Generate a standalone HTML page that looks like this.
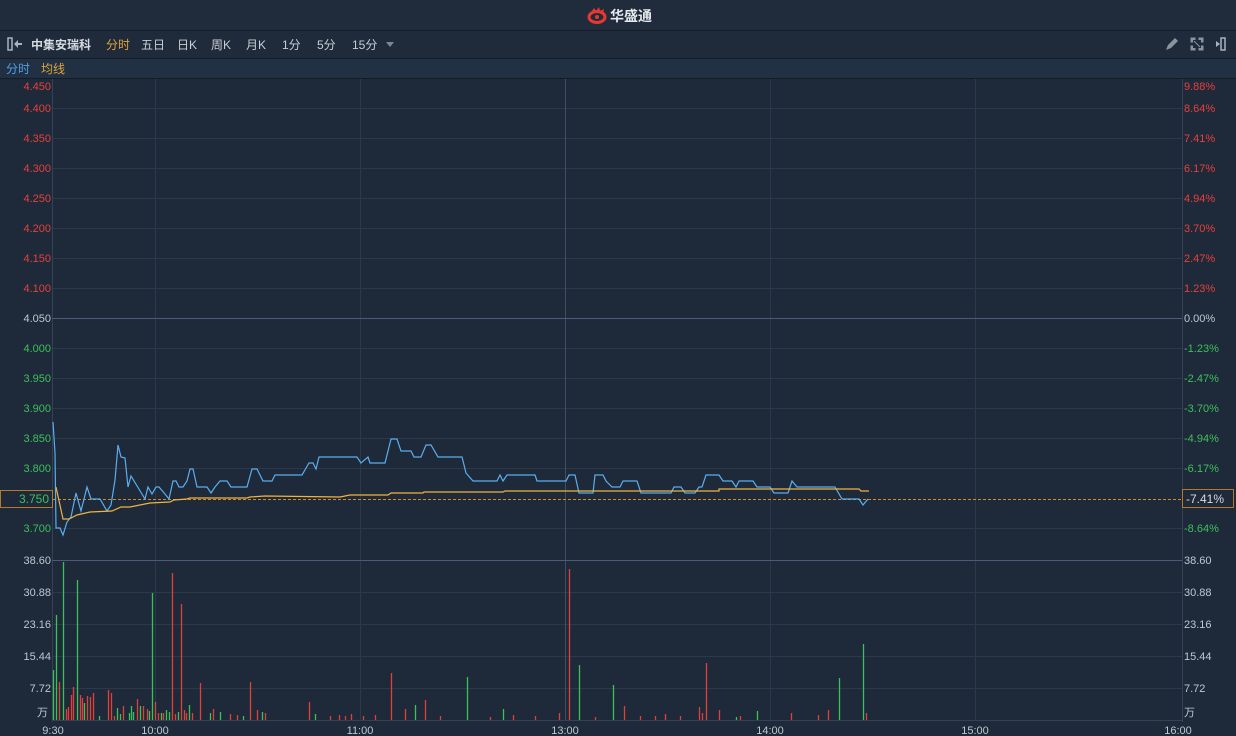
<!DOCTYPE html>
<html><head><meta charset="utf-8"><style>
body{margin:0;width:1236px;height:736px;overflow:hidden;background:#1e2939;font-family:"Liberation Sans","Noto Sans CJK SC",sans-serif;}
svg{display:block}
</style></head><body>
<svg width="1236" height="736" xmlns="http://www.w3.org/2000/svg" font-family="Liberation Sans, Noto Sans CJK SC, sans-serif">
<rect width="1236" height="736" fill="#1e2939"/>
<rect width="1236" height="30" fill="#202b3c"/>
<line x1="0" y1="30.5" x2="1236" y2="30.5" stroke="#141c28"/>
<rect y="31" width="1236" height="27" fill="#1f2a3a"/>
<line x1="0" y1="58.5" x2="1236" y2="58.5" stroke="#141c28"/>
<rect y="59" width="1236" height="19" fill="#213043"/>
<line x1="0" y1="78.5" x2="1236" y2="78.5" stroke="#141c28"/>
<!-- logo -->
<g transform="translate(588,7)">
<ellipse cx="9" cy="10" rx="8" ry="5.5" fill="none" stroke="#e8382e" stroke-width="3"/>
<circle cx="9" cy="10" r="2" fill="#e8382e"/>
<path d="M4 4 L6 1 L8 4 L11 0 L12 4 L16 2 L15 6" fill="#e8382e"/>
</g>
<text x="610" y="21" font-size="14" font-weight="bold" fill="#e6e9ee">华盛通</text>
<!-- toolbar -->
<rect x="8" y="38" width="4" height="12" fill="none" stroke="#aab2bd" stroke-width="1.5"/>
<path d="M14 44 L18 40 L18 48 Z M17 43 h5 v2 h-5z" fill="#aab2bd"/>
<g font-size="12" fill="#c8ced6">
<text x="31" y="49" font-weight="bold" fill="#d6dbe2">中集安瑞科</text>
<text x="106" y="49" fill="#e0a43c">分时</text>
<text x="141" y="49">五日</text>
<text x="177" y="49">日K</text>
<text x="211" y="49">周K</text>
<text x="246" y="49">月K</text>
<text x="282" y="49">1分</text>
<text x="317" y="49">5分</text>
<text x="352" y="49">15分</text>
</g>
<path d="M386 42 h8 l-4 5z" fill="#7d8794"/>
<path d="M1166 50 l2-5 l7-7 l3 3 l-7 7z" fill="#8a939e"/>
<path d="M1191 38 h4 v1.5 h-2.5 v2.5 h-1.5z M1203 38 h-4 v1.5 h2.5 v2.5 h1.5z M1191 50 h4 v-1.5 h-2.5 v-2.5 h-1.5z M1203 50 h-4 v-1.5 h2.5 v-2.5 h1.5z M1194 41 l6 6" fill="#8a939e" stroke="#8a939e" stroke-width="1"/>
<path d="M1212 44 h4 v-3 l4 3 l-4 3 v-3z" fill="#aab2bd"/>
<rect x="1221" y="38" width="4" height="12" fill="none" stroke="#aab2bd" stroke-width="1.5"/>
<text x="6" y="73" font-size="12" fill="#4ea0e6">分时</text>
<text x="41" y="73" font-size="12" fill="#e0a43c">均线</text>
<!-- grid -->
<g stroke="#2c394b" stroke-width="1">
<line x1="155.5" y1="79" x2="155.5" y2="720"/><line x1="360.5" y1="79" x2="360.5" y2="720"/>
<line x1="770.5" y1="79" x2="770.5" y2="720"/><line x1="975.5" y1="79" x2="975.5" y2="720"/>
<path d="M52 108.5H1182M52 138.5H1182M52 168.5H1182M52 198.5H1182M52 228.5H1182M52 258.5H1182M52 288.5H1182M52 348.5H1182M52 378.5H1182M52 408.5H1182M52 438.5H1182M52 468.5H1182M52 528.5H1182M52 592.5H1182M52 624.5H1182M52 656.5H1182M52 688.5H1182"/>
</g>
<line x1="565.5" y1="79" x2="565.5" y2="720" stroke="#3f4e62"/>
<line x1="52.5" y1="79" x2="52.5" y2="722" stroke="#344257"/>
<line x1="1182.5" y1="79" x2="1182.5" y2="722" stroke="#344257"/>
<line x1="52" y1="318.5" x2="1182" y2="318.5" stroke="#4a5c78"/>
<line x1="52" y1="560.5" x2="1182" y2="560.5" stroke="#4a5c78"/>
<line x1="52" y1="720.5" x2="1182" y2="720.5" stroke="#344257"/>
<!-- left labels -->
<g font-size="11" text-anchor="end">
<g fill="#e8403c"><text x="51" y="90">4.450</text><text x="51" y="112">4.400</text><text x="51" y="142">4.350</text><text x="51" y="172">4.300</text><text x="51" y="202">4.250</text><text x="51" y="232">4.200</text><text x="51" y="262">4.150</text><text x="51" y="292">4.100</text></g>
<text x="51" y="322" fill="#c0c7d0">4.050</text>
<g fill="#3cc15a"><text x="51" y="352">4.000</text><text x="51" y="382">3.950</text><text x="51" y="412">3.900</text><text x="51" y="442">3.850</text><text x="51" y="472">3.800</text><text x="51" y="532">3.700</text></g>
<g fill="#c0c7d0"><text x="51" y="564">38.60</text><text x="51" y="596">30.88</text><text x="51" y="628">23.16</text><text x="51" y="660">15.44</text><text x="51" y="692">7.72</text><text x="48" y="716">万</text></g>
</g>
<rect x="0.5" y="490.5" width="52" height="17" fill="#1e2939" stroke="#b5782e"/>
<text x="49" y="503" font-size="12" text-anchor="end" fill="#3cc15a">3.750</text>
<!-- right labels -->
<g font-size="11">
<g fill="#e8403c"><text x="1184" y="90">9.88%</text><text x="1184" y="112">8.64%</text><text x="1184" y="142">7.41%</text><text x="1184" y="172">6.17%</text><text x="1184" y="202">4.94%</text><text x="1184" y="232">3.70%</text><text x="1184" y="262">2.47%</text><text x="1184" y="292">1.23%</text></g>
<text x="1184" y="322" fill="#c0c7d0">0.00%</text>
<g fill="#3cc15a"><text x="1184" y="352">-1.23%</text><text x="1184" y="382">-2.47%</text><text x="1184" y="412">-3.70%</text><text x="1184" y="442">-4.94%</text><text x="1184" y="472">-6.17%</text><text x="1184" y="532">-8.64%</text></g>
<g fill="#c0c7d0"><text x="1184" y="564">38.60</text><text x="1184" y="596">30.88</text><text x="1184" y="628">23.16</text><text x="1184" y="660">15.44</text><text x="1184" y="692">7.72</text><text x="1184" y="716">万</text></g>
</g>
<rect x="1182.5" y="489.5" width="51" height="18" fill="#1e2939" stroke="#b5782e"/>
<text x="1186" y="503" font-size="12" fill="#d6dbe2">-7.41%</text>
<!-- time labels -->
<g font-size="11" fill="#c0c7d0" text-anchor="middle">
<text x="53" y="734">9:30</text><text x="155" y="734">10:00</text><text x="360" y="734">11:00</text><text x="565" y="734">13:00</text><text x="770" y="734">14:00</text><text x="975" y="734">15:00</text><text x="1178" y="734">16:00</text>
</g>
<line x1="53" y1="499.5" x2="1182" y2="499.5" stroke="#d08a30" stroke-dasharray="3,2"/>
<!-- price line -->
<polyline fill="none" stroke="#5aaef0" stroke-width="1.2" points="53,422 55,453 56,528 60,528 63,535 67,522 71,517 76,493 81,511 87,487 91,499 100,499 107,511 111,505 115,480 118,445 121,457 125,458 128,487 131,476 145,499 148,487 152,494 156,487 159,487 165,494 169,499 173,481 176,481 179,487 183,487 187,481 190,469 193,469 197,487 207,487 211,493 215,487 220,481 227,481 231,487 247,487 252,469 257,469 263,481 272,481 275,475 302,475 309,463 313,463 316,469 319,457 357,457 361,463 368,457 370,463 385,463 391,439 397,439 401,451 411,451 414,457 421,457 426,445 431,445 438,457 462,457 466,473 473,481 497,481 500,475 503,481 507,475 535,475 537,481 566,481 569,475 575,475 579,493 593,493 595,475 603,475 606,481 612,487 620,487 623,481 637,481 641,493 671,493 674,487 681,487 685,493 695,493 699,487 702,487 706,475 719,475 723,481 732,481 736,487 739,481 753,481 757,487 770,487 774,493 788,493 792,481 797,487 835,487 842,499 859,499 863,505 868,499"/>
<polyline fill="none" stroke="#f0b440" stroke-width="1.2" points="56,487 63,519 69,519 77,515 90,512 112,511 121,507 130,507 150,503 170,502 174,500 187,499 190,498 247,498 250,497 265,496 340,497 350,495 388,495 391,493 423,493 424,492 503,492 505,491 568,491 719,491 719,489 859,489 861,491 869,491"/>
<!-- volume -->
<g stroke-width="1.3">
<path stroke="#3cc15a" d="M53.5 720V670M56.5 720V615M63.5 720V562M77.5 720V580M84.5 720V703M99.5 720V716M117.5 720V708M120.5 720V714M129.5 720V713M131.5 720V706M133.5 720V712M140.5 720V706M149.5 720V711M152.5 720V593M161.5 720V713M166.5 720V710M169.5 720V712M178.5 720V712M189.5 720V705M210.5 720V713M220.5 720V712M243.5 720V716M262.5 720V712M315.5 720V714M415.5 720V705M467.5 720V677M503.5 720V709M579.5 720V665M613.5 720V685M736.5 720V717M757.5 720V711M839.5 720V678M863.5 720V644"/>
<path stroke="#e0403c" d="M59.5 720V682M66.5 720V709M68.5 720V707M71.5 720V695M73.5 720V687M80.5 720V695M82.5 720V698M87.5 720V696M90.5 720V697M93.5 720V693M108.5 720V690M111.5 720V693M114.5 720V716M123.5 720V706M137.5 720V699M143.5 720V706M147.5 720V709M155.5 720V702M158.5 720V713M163.5 720V713M172.5 720V573M175.5 720V714M181.5 720V604M184.5 720V710M186.5 720V713M192.5 720V713M200.5 720V683M213.5 720V709M230.5 720V714M237.5 720V715M250.5 720V682M257.5 720V710M265.5 720V713M309.5 720V702M339.5 720V715M351.5 720V714M363.5 720V716M391.5 720V673M405.5 720V709M425.5 720V700M513.5 720V715M559.5 720V713M569.5 720V569M595.5 720V717M624.5 720V706M665.5 720V714M699.5 720V707M702.5 720V713M706.5 720V663M719.5 720V710M740.5 720V716M791.5 720V713M818.5 720V715M828.5 720V710M866.5 720V713M330.5 720V716M345.5 720V716M375.5 720V715M440.5 720V716M490.5 720V717M535.5 720V716M640.5 720V716M655.5 720V716M680.5 720V716"/>
</g>
</svg>
</body></html>
